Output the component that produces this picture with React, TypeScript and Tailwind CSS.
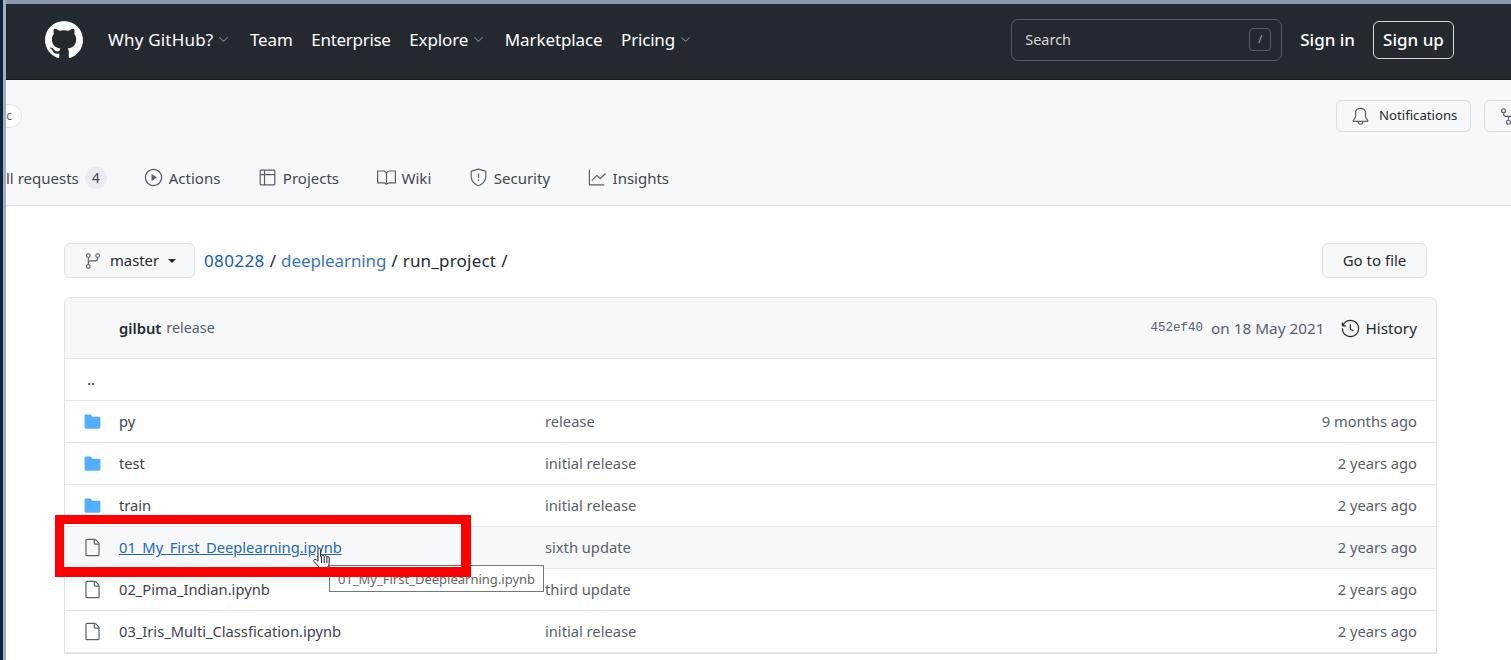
import React from 'react';
import {
  GoBell,
  GoBook,
  GoChevronDown,
  GoFile,
  GoFileDirectoryFill,
  GoGitBranch,
  GoGraph,
  GoHistory,
  GoPlay,
  GoRepoForked,
  GoShield,
  GoTable,
} from 'react-icons/go';

const navItems = [
  { label: 'Why GitHub?', caret: true, spacing: 'tracking-[0.2px]' },
  { label: 'Team', caret: false, spacing: 'tracking-[-0.1px]' },
  { label: 'Enterprise', caret: false, spacing: 'tracking-[-0.3px]' },
  { label: 'Explore', caret: true, spacing: 'tracking-[-0.1px]' },
  { label: 'Marketplace', caret: false, spacing: 'tracking-[-0.1px]' },
  { label: 'Pricing', caret: true, spacing: 'tracking-[-0.2px]' },
];

const tabs = [
  { label: 'Actions', icon: GoPlay },
  { label: 'Projects', icon: GoTable },
  { label: 'Wiki', icon: GoBook },
  { label: 'Security', icon: GoShield },
  { label: 'Insights', icon: GoGraph },
];

const rows = [
  { name: 'py', dir: true, message: 'release', age: '9 months ago' },
  { name: 'test', dir: true, message: 'initial release', age: '2 years ago' },
  { name: 'train', dir: true, message: 'initial release', age: '2 years ago' },
  { name: '01_My_First_Deeplearning.ipynb', dir: false, message: 'sixth update', age: '2 years ago', active: true },
  { name: '02_Pima_Indian.ipynb', dir: false, message: 'third update', age: '2 years ago' },
  { name: '03_Iris_Multi_Classfication.ipynb', dir: false, message: 'initial release', age: '2 years ago' },
];

function GithubMark() {
  return (
    <svg className="h-[38px] w-[38px]" viewBox="0 0 16 16" fill="currentColor">
      <path d="M8 0C3.58 0 0 3.58 0 8c0 3.54 2.29 6.53 5.47 7.59.4.07.55-.17.55-.38 0-.19-.01-.82-.01-1.49-2.01.37-2.53-.49-2.69-.94-.09-.23-.48-.94-.82-1.13-.28-.15-.68-.52-.01-.53.63-.01 1.08.58 1.23.82.72 1.21 1.87.87 2.33.66.07-.52.28-.87.51-1.07-1.78-.2-3.64-.89-3.64-3.95 0-.87.31-1.59.82-2.15-.08-.2-.36-1.02.08-2.12 0 0 .67-.21 2.2.82.64-.18 1.32-.27 2-.27.68 0 1.36.09 2 .27 1.53-1.04 2.2-.82 2.2-.82.44 1.1.16 1.92.08 2.12.51.56.82 1.27.82 2.15 0 3.07-1.87 3.75-3.65 3.95.29.25.54.73.54 1.48 0 1.07-.01 1.93-.01 2.2 0 .21.15.46.55.38A8.013 8.013 0 0016 8c0-4.42-3.58-8-8-8z" />
    </svg>
  );
}

function Header() {
  return (
    <header className="flex h-[76px] shrink-0 items-center border-b border-[#14171a] bg-[#24292f] pb-[4px] pl-[39px] pr-[57px] text-white">
      <GithubMark />
      <nav className="ml-[25px] flex items-center gap-[18.5px] text-[17px]">
        {navItems.map((item) => (
          <span key={item.label} className={`flex items-center gap-[3px] ${item.spacing}`}>
            {item.label}
            {item.caret && <GoChevronDown className="h-[15px] w-[15px] text-[#8b8f94]" />}
          </span>
        ))}
      </nav>
      <div className="ml-auto flex h-[42px] w-[271px] items-center justify-between rounded-[7px] border border-[#575c62] pl-[13px] pr-[10px] text-[14.5px] text-[#d5d7d9]">
        Search
        <span className="flex h-[23px] w-[22px] items-center justify-center rounded-[4px] border border-[#575c62] text-[11px] text-[#a9acaf]">/</span>
      </div>
      <span className="ml-[18px] text-[17px] font-medium">Sign in</span>
      <span className="ml-[18px] flex h-[38px] w-[81px] items-center justify-center rounded-[6px] border border-[#d6d8da] text-[17px] font-medium">Sign up</span>
    </header>
  );
}

function RepoHead() {
  return (
    <section className="relative flex h-[126px] shrink-0 flex-col justify-between overflow-hidden border-b border-[#dfe3e7] bg-[#f6f8fa] pb-[16px] pt-[20px]">
      <div className="flex items-center justify-between">
        <span className="-ml-[10px] flex h-[24px] w-[26px] items-center justify-end rounded-full border border-[#e0e3e6] bg-white pr-[9px] text-[12px] text-[#57606a]">c</span>
        <div className="-mr-[40px] flex gap-[13px]">
          <span className="flex h-[32px] w-[135px] items-center gap-[9px] rounded-[6px] border border-[#dcdfe3] bg-[#f6f8fa] pl-[14px] text-[13.2px] text-[#24292f]">
            <GoBell className="h-[19px] w-[19px] text-[#57606a]" />
            Notifications
          </span>
          <span className="flex h-[32px] w-[67px] items-center rounded-[6px] border border-[#dcdfe3] pl-[14px]">
            <GoRepoForked className="h-[19px] w-[19px] text-[#57606a]" />
          </span>
        </div>
      </div>
      <nav className="flex items-center text-[15px] text-[#3f4750]">
        <span className="flex items-center gap-[6px]">
          ll requests
          <span className="flex h-[22px] w-[22px] items-center justify-center rounded-full bg-[#e9ebee] text-[13.5px]">4</span>
        </span>
        <div className="ml-[37px] flex items-center gap-[37.5px]">
          {tabs.map((tab) => (
            <span key={tab.label} className="flex items-center gap-[6px]">
              <tab.icon className="h-[19px] w-[19px] text-[#57606a]" />
              {tab.label}
            </span>
          ))}
        </div>
      </nav>
    </section>
  );
}

function FileTable() {
  return (
    <div className="mt-[19px] rounded-t-[7px] border border-[#dfe3e7]">
      <div className="flex h-[61px] items-center rounded-t-[7px] border-b border-[#dfe3e7] bg-[#f6f8fa] pl-[54px] pr-[19px] text-[14.8px] text-[#57606a]">
        <span className="font-semibold text-[#24292f]">gilbut</span>
        <span className="ml-[5px] text-[14.3px]">release</span>
        <span className="ml-auto font-['Liberation_Mono',monospace] text-[12.5px]">452ef40</span>
        <span className="ml-[8px] text-[15.3px]">on 18 May 2021</span>
        <span className="ml-[17px] flex items-center gap-[5px] text-[15.3px] text-[#24292f]">
          <GoHistory className="h-[19px] w-[19px]" />
          History
        </span>
      </div>
      <div className="flex h-[42px] items-center border-b border-[#e4e7ea] pl-[22px] text-[15px] text-[#0a3069]">..</div>
      {rows.map((row) => (
        <div
          key={row.name}
          className={`flex h-[42px] items-center border-b border-[#e4e7ea] pl-[18px] pr-[19px] text-[14.7px] text-[#57606a] ${row.active ? 'bg-[#f6f8fa]' : ''}`}
        >
          {row.dir ? (
            <GoFileDirectoryFill className="h-[19px] w-[19px] text-[#54aeff]" />
          ) : (
            <GoFile className="h-[19px] w-[19px] text-[#57606a]" />
          )}
          <span className={`ml-[17px] w-[426px] ${row.active ? 'text-[#2368b5] underline' : 'text-[#3d444c]'}`}>{row.name}</span>
          <span>{row.message}</span>
          <span className="ml-auto">{row.age}</span>
        </div>
      ))}
    </div>
  );
}

export default function App() {
  return (
    <div className="relative flex h-[660px] w-[1511px] overflow-hidden bg-white font-['Noto_Sans',sans-serif]">
      <div className="w-[6px] shrink-0 border-r-[3px] border-[#9fb0c4] bg-[#10233f]" />
      <div className="flex min-w-0 flex-1 flex-col">
        <div className="h-[4px] shrink-0 bg-[#8b98ad]" />
        <Header />
        <RepoHead />
        <main className="pl-[58px] pr-[74px] pt-[37px]">
          <div className="flex items-center">
            <span className="flex h-[35px] w-[131px] items-center rounded-[6px] border border-[#dfe3e7] bg-[#f6f8fa] pl-[19px] text-[14.8px] text-[#24292f]">
              <GoGitBranch className="h-[18px] w-[18px] text-[#57606a]" />
              <span className="ml-[8px]">master</span>
              <span className="ml-[9px] h-0 w-0 border-x-[4px] border-t-[4px] border-x-transparent border-t-[#24292f]" />
            </span>
            <div className="ml-[9px] flex items-center gap-[5px] text-[17px] text-[#24292f]">
              <span className="tracking-[0.4px] text-[#0f5cb5]">080228</span>
              <span>/</span>
              <span className="tracking-[-0.1px] text-[#3a76b8]">deeplearning</span>
              <span>/</span>
              <span className="tracking-[0.2px]">run_project</span>
              <span>/</span>
            </div>
            <span className="ml-auto mr-[10px] flex h-[35px] w-[105px] items-center justify-center rounded-[6px] border border-[#dfe3e7] bg-[#f6f8fa] text-[15px] text-[#24292f]">Go to file</span>
          </div>
          <FileTable />
        </main>
      </div>

      {/* hand cursor and tooltip lie under the red highlight, as in the capture */}
      <svg className="absolute left-[311px] top-[547px]" width="22" height="24" viewBox="0 0 22 24">
        <path
          d="M7 2.5c0-1.6 2.600-1.600 2.600 0v7l1-.2c.3-1.200 2.400-1.100 2.600.2.4-1 2.400-.9 2.600.4.6-.8 2.400-.5 2.400 1v5c0 2.500-1.500 4.600-3 5.600H9.500L3 14.500c-1-1.300.8-2.900 2.200-1.800L7 14.200V2.500z"
          fill="#fff"
          stroke="#222"
          strokeWidth="1"
        />
        <path d="M10.500 10v6M13.200 10v6M15.900 10v6" stroke="#222" strokeWidth="1" />
      </svg>
      <div className="absolute left-[329px] top-[565px] flex h-[27px] w-[215px] items-center justify-center border border-[#767676] bg-white pt-[2px] text-[13px] text-[#666666]">
        01_My_First_Deeplearning.ipynb
      </div>
      <div className="absolute left-[55px] top-[515px] h-[62px] w-[416px] border-t-[9px] border-r-[10px] border-b-[10px] border-l-[9px] border-[#fe0000]" />
    </div>
  );
}
